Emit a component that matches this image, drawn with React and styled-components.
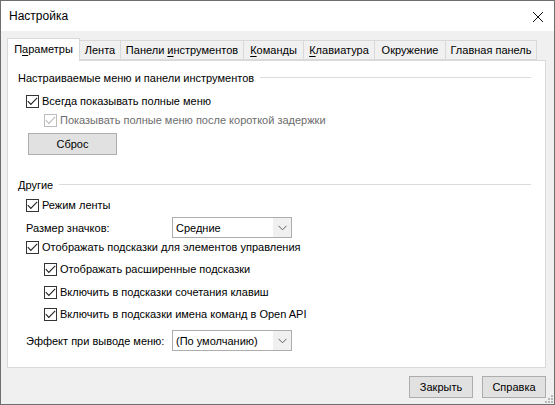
import React from 'react'
import styled, { createGlobalStyle } from 'styled-components'

const Global = createGlobalStyle`
  html, body { margin: 0; padding: 0; background: #ffffff; }
  body { font-family: "Liberation Sans", Arial, sans-serif; font-size: 11px; color: #000; }
`

const Window = styled.div`
  width: 555px;
  height: 405px;
  box-sizing: border-box;
  border: 1px solid #6e6e6e;
  background: #f0f0f0;
  display: flex;
  flex-direction: column;
  position: relative;
  overflow: hidden;
`

const TitleBar = styled.div`
  height: 30px;
  flex: none;
  background: #ffffff;
  display: flex;
  align-items: center;
  justify-content: space-between;
  padding: 0 10px 0 8px;
  font-size: 12px;
`

const CloseBtn = styled.div`
  width: 12px;
  height: 12px;
  display: flex;
  margin-top: 2px;
`

const Body = styled.div`
  flex: 1;
  display: flex;
  flex-direction: column;
  padding: 7px 8px 0 6px;
`

const TabStrip = styled.div`
  display: flex;
  align-items: flex-end;
  height: 22px;
  position: relative;
  z-index: 1;
`

const Tab = styled.div`
  box-sizing: border-box;
  flex: none;
  width: ${p => p.$w}px;
  height: ${p => (p.$active ? '23px' : '20px')};
  margin-bottom: ${p => (p.$active ? '-1px' : '0')};
  display: flex;
  align-items: center;
  justify-content: center;
  border: 1px solid #d9d9d9;
  border-left: ${p => (p.$first || p.$active ? '1px solid #d9d9d9' : 'none')};
  border-bottom: ${p => (p.$active ? 'none' : '1px solid #d9d9d9')};
  background: ${p => (p.$active ? '#ffffff' : '#f0f0f0')};
  white-space: nowrap;
  padding-bottom: ${p => (p.$active ? '2px' : '0')};
  u { text-decoration: underline; text-underline-offset: 2px; }
`

const Panel = styled.div`
  box-sizing: border-box;
  width: 539px;
  height: 308px;
  background: #ffffff;
  border: 1px solid #d9d9d9;
  display: flex;
  flex-direction: column;
  padding: 8px 14px 0 10px;
`

const GroupHead = styled.div`
  display: flex;
  align-items: center;
  height: 18px;
  margin-top: ${p => p.$mt || 0}px;
  gap: 6px;
  &::after {
    content: '';
    flex: 1;
    height: 1px;
    background: #dcdcdc;
    margin-top: -1px;
  }
`

const Row = styled.label`
  display: flex;
  align-items: center;
  height: ${p => p.$h || 18}px;
  margin-top: ${p => p.$mt || 0}px;
  padding-left: ${p => p.$indent || 8}px;
  color: ${p => (p.$disabled ? '#6d6d6d' : '#000')};
  white-space: nowrap;
`

const Box = styled.span`
  box-sizing: border-box;
  width: 13px;
  height: 13px;
  flex: none;
  border: 1px solid ${p => (p.$disabled ? '#bcbcbc' : '#333333')};
  background: #ffffff;
  margin-right: 3px;
  display: flex;
  align-items: center;
  justify-content: center;
`

const Field = styled.span`
  width: 146px;
  flex: none;
`

const Select = styled.div`
  box-sizing: border-box;
  width: 120px;
  height: 21px;
  border: 1px solid #adadad;
  background: #ffffff;
  display: flex;
  align-items: stretch;
`

const SelectText = styled.div`
  flex: 1;
  display: flex;
  align-items: center;
  padding-left: 3px;
`

const SelectArrow = styled.div`
  width: 18px;
  background: #f0f0f0;
  display: flex;
  align-items: center;
  justify-content: center;
`

const Button = styled.div`
  box-sizing: border-box;
  width: ${p => p.$w || 64}px;
  height: 22px;
  background: #e1e1e1;
  border: 1px solid #adadad;
  display: flex;
  align-items: center;
  justify-content: center;
  margin-top: ${p => p.$mt || 0}px;
  margin-left: ${p => p.$ml || 0}px;
`

const Footer = styled.div`
  display: flex;
  justify-content: flex-end;
  gap: 9px;
  padding: 8px 0 0 0;
`

const Grip = styled.svg`
  position: absolute;
  right: 1px;
  bottom: 1px;
`

const Check = ({ disabled }) => (
  <Box $disabled={disabled}>
    <svg width="11" height="9" viewBox="0 0 11 9">
      <path d="M0.8 4.2 L3.8 7.4 L10.2 0.8" fill="none" stroke={disabled ? '#bcbcbc' : '#222'} strokeWidth="1.1" />
    </svg>
  </Box>
)

const Chevron = () => (
  <svg width="9" height="6" viewBox="0 0 9 6">
    <path d="M0.5 0.8 L4.5 4.8 L8.5 0.8" fill="none" stroke="#606060" strokeWidth="1" />
  </svg>
)

const Dropdown = ({ value }) => (
  <Select>
    <SelectText>{value}</SelectText>
    <SelectArrow><Chevron /></SelectArrow>
  </Select>
)

export default function App() {
  return (
    <>
      <Global />
      <Window>
        <TitleBar>
          <span>Настройка</span>
          <CloseBtn>
            <svg width="12" height="12" viewBox="0 0 12 12">
              <path d="M1 1 L11 11 M11 1 L1 11" stroke="#111" strokeWidth="1" />
            </svg>
          </CloseBtn>
        </TitleBar>
        <Body>
          <TabStrip>
            <Tab $active $first $w={73}><span>П<u>а</u>раметры</span></Tab>
            <Tab $w={41}><span>Лента</span></Tab>
            <Tab $w={123}><span>Панели <u>и</u>нструментов</span></Tab>
            <Tab $w={60}><span><u>К</u>оманды</span></Tab>
            <Tab $w={71}><span><u>К</u>лавиатура</span></Tab>
            <Tab $w={71}><span>Окружение</span></Tab>
            <Tab $w={91}><span>Главная панель</span></Tab>
          </TabStrip>
          <Panel>
            <GroupHead>Настраиваемые меню и панели инструментов</GroupHead>
            <Row $mt={5}><Check />Всегда показывать полные меню</Row>
            <Row $mt={1} $indent={26} $disabled><Check disabled />Показывать полные меню после короткой задержки</Row>
            <Button $w={89} $mt={4} $ml={10}>Сброс</Button>
            <GroupHead $mt={21}>Другие</GroupHead>
            <Row $mt={2}><Check />Режим ленты</Row>
            <Row $mt={3} $h={21}><Field>Размер значков:</Field><Dropdown value="Средние" /></Row>
            <Row><Check />Отображать подсказки для элементов управления</Row>
            <Row $mt={4} $indent={26}><Check />Отображать расширенные подсказки</Row>
            <Row $mt={5} $indent={26}><Check />Включить в подсказки сочетания клавиш</Row>
            <Row $mt={4} $indent={26}><Check />Включить в подсказки имена команд в Open API</Row>
            <Row $mt={7} $h={21}><Field>Эффект при выводе меню:</Field><Dropdown value="(По умолчанию)" /></Row>
          </Panel>
          <Footer>
            <Button>Закрыть</Button>
            <Button>Справка</Button>
          </Footer>
        </Body>
        <Grip width="10" height="10" viewBox="0 0 10 10">
          {[[8, 2], [8, 5], [5, 5], [8, 8], [5, 8], [2, 8]].map(([x, y]) => (
            <rect key={x + '-' + y} x={x} y={y} width="2" height="2" fill="#b8b8b8" />
          ))}
        </Grip>
      </Window>
    </>
  )
}
